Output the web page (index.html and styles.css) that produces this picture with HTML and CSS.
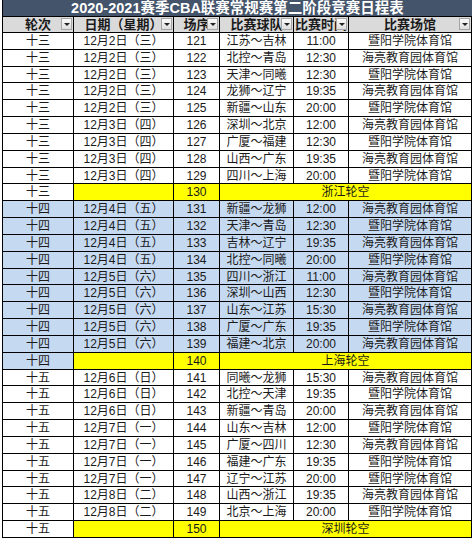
FILE: index.html
```html
<!DOCTYPE html>
<html lang="zh">
<head>
<meta charset="utf-8">
<link rel="stylesheet" href="styles.css">
</head>
<body>
<div class="sheet" id="sheet">
  <div class="title">2020-2021赛季CBA联赛常规赛第二阶段竞赛日程表</div>
  <div class="hd">轮次<span class="dd"></span></div>
  <div class="hd">日期（星期）<span class="dd"></span></div>
  <div class="hd">场序<span class="dd"></span></div>
  <div class="hd">比赛球队<span class="dd"></span></div>
  <div class="hd">比赛时间<span class="dd"></span></div>
  <div class="hd">比赛场馆<span class="dd"></span></div>
</div>
<script src="app.js"></script>
</body>
</html>
```
FILE: app.js
```js
const rows = [
["十三","12月2日（三）","121","江苏～吉林","11:00","暨阳学院体育馆"],
["十三","12月2日（三）","122","北控～青岛","12:30","海亮教育园体育馆"],
["十三","12月2日（三）","123","天津～同曦","12:30","暨阳学院体育馆"],
["十三","12月2日（三）","124","龙狮～辽宁","19:35","海亮教育园体育馆"],
["十三","12月2日（三）","125","新疆～山东","20:00","暨阳学院体育馆"],
["十三","12月3日（四）","126","深圳～北京","12:00","海亮教育园体育馆"],
["十三","12月3日（四）","127","广厦～福建","12:30","暨阳学院体育馆"],
["十三","12月3日（四）","128","山西～广东","19:35","海亮教育园体育馆"],
["十三","12月3日（四）","129","四川～上海","20:00","暨阳学院体育馆"],
["十三",null,"130","浙江轮空"],
["十四","12月4日（五）","131","新疆～龙狮","12:00","海亮教育园体育馆"],
["十四","12月4日（五）","132","天津～青岛","12:30","暨阳学院体育馆"],
["十四","12月4日（五）","133","吉林～辽宁","19:35","海亮教育园体育馆"],
["十四","12月4日（五）","134","北控～同曦","20:00","暨阳学院体育馆"],
["十四","12月5日（六）","135","四川～浙江","11:00","海亮教育园体育馆"],
["十四","12月5日（六）","136","深圳～山西","12:30","暨阳学院体育馆"],
["十四","12月5日（六）","137","山东～江苏","15:30","海亮教育园体育馆"],
["十四","12月5日（六）","138","广厦～广东","19:35","暨阳学院体育馆"],
["十四","12月5日（六）","139","福建～北京","20:00","海亮教育园体育馆"],
["十四",null,"140","上海轮空"],
["十五","12月6日（日）","141","同曦～龙狮","15:30","海亮教育园体育馆"],
["十五","12月6日（日）","142","北控～天津","19:35","暨阳学院体育馆"],
["十五","12月6日（日）","143","新疆～青岛","20:00","海亮教育园体育馆"],
["十五","12月7日（一）","144","山东～吉林","12:00","暨阳学院体育馆"],
["十五","12月7日（一）","145","广厦～四川","12:30","海亮教育园体育馆"],
["十五","12月7日（一）","146","福建～广东","19:35","暨阳学院体育馆"],
["十五","12月7日（一）","147","辽宁～江苏","20:00","暨阳学院体育馆"],
["十五","12月8日（二）","148","山西～浙江","19:35","海亮教育园体育馆"],
["十五","12月8日（二）","149","北京～上海","20:00","暨阳学院体育馆"],
["十五",null,"150","深圳轮空"]
];
const sheet = document.getElementById("sheet");
function cell(text, cls) {
  const d = document.createElement("div");
  d.className = "c " + cls;
  d.textContent = text;
  sheet.appendChild(d);
}
rows.forEach(r => {
  const tone = r[0] === "十四" ? "blue" : "white";
  if (r[1] === null) {
    cell(r[0], tone);
    cell("", "yellow");
    cell(r[2], "yellow");
    cell(r[3], "yellow span3");
  } else {
    r.forEach(t => cell(t, tone));
  }
});
```
FILE: styles.css
```css
html, body {
  margin: 0;
  padding: 0;
  background: #ffffff;
}
body {
  padding: 0 0 0 2px;
}
.sheet {
  display: grid;
  grid-template-columns: 71px 100px 46px 74px 55px 123px;
  grid-template-rows: 16px 17px;
  grid-auto-rows: 16.83px;
  width: 469px;
  font-family: "Liberation Sans", "Noto Sans CJK SC", sans-serif;
  font-size: 12px;
  color: #1a1a1a;
  border-left: 1px solid #000;
  text-spacing-trim: space-all;
  font-feature-settings: "halt" 0, "chws" 0;
}
.title {
  grid-column: 1 / -1;
  background: #44546a;
  color: #fff;
  font-weight: bold;
  font-size: 14.5px;
  line-height: 16px;
  text-align: center;
  white-space: nowrap;
  overflow: hidden;
}
.hd {
  position: relative;
  background: #dadada;
  font-weight: bold;
  font-size: 13px;
  line-height: 16px;
  text-align: center;
  border-right: 1px solid #000;
  border-bottom: 1px solid #000;
  border-top: 1px solid #000;
  box-sizing: border-box;
  white-space: nowrap;
  overflow: hidden;
}
.dd {
  position: absolute;
  right: 1px;
  top: 1px;
  width: 11px;
  height: 12px;
  box-sizing: border-box;
  border: 1px solid #a6a6a6;
  background: linear-gradient(#fbfbfb, #dedede);
}
.dd::after {
  content: "";
  position: absolute;
  left: 2px;
  top: 4px;
  border-left: 3px solid transparent;
  border-right: 3px solid transparent;
  border-top: 3px solid #222;
}
.c {
  box-sizing: border-box;
  border-right: 1px solid #000;
  border-bottom: 1px solid #000;
  text-align: center;
  line-height: 16px;
  white-space: nowrap;
  overflow: hidden;
}
.white { background: #ffffff; }
.blue { background: #c5d9f1; }
.yellow { background: #ffff00; }
.span3 { grid-column: span 3; }
```
